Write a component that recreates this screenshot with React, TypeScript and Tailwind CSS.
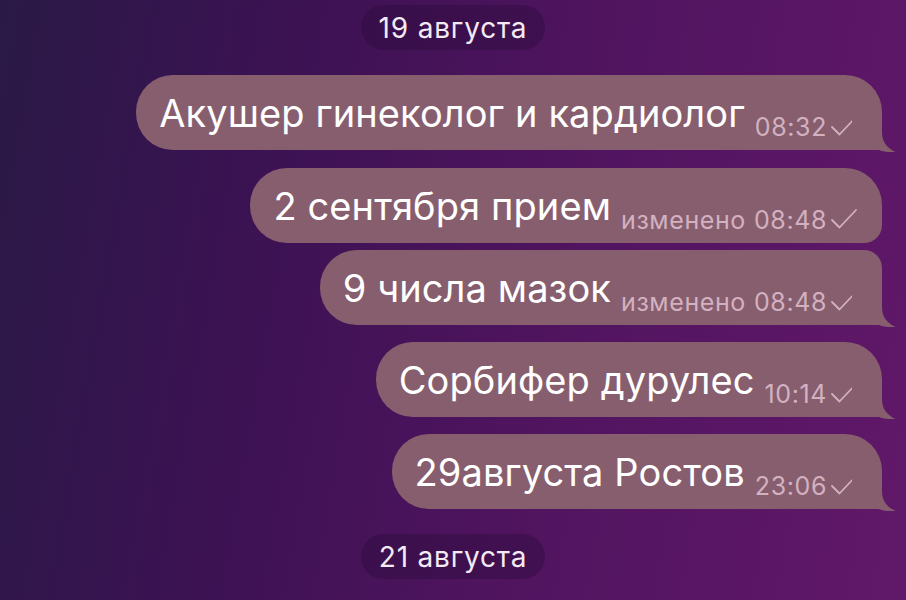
import React from 'react'

type Msg = {
  text: string
  time: string
  edited?: boolean
  tail: boolean
  shape: string
}

const MESSAGES: Msg[] = [
  { text: 'Акушер гинеколог и кардиолог', time: '08:32', tail: true, shape: 'rounded-[37px] rounded-br-none' },
  { text: '2 сентября прием', time: '08:48', edited: true, tail: false, shape: 'rounded-[37px] rounded-br-[18px]' },
  { text: '9 числа мазок', time: '08:48', edited: true, tail: true, shape: 'rounded-[37px] rounded-tr-[18px] rounded-br-none' },
  { text: 'Сорбифер дурулес', time: '10:14', tail: true, shape: 'rounded-[37px] rounded-br-none' },
  { text: '29августа Ростов', time: '23:06', tail: true, shape: 'rounded-[37px] rounded-br-none' },
]

function Check() {
  return (
    <svg width="28" height="22" viewBox="0 0 28 22" fill="none" className="ml-[3px] -translate-y-[1px]">
      <path d="M2 12 L9.5 19.5 L26 2" stroke="#d3b1c0" strokeWidth="1.8" strokeLinecap="round" strokeLinejoin="round" />
    </svg>
  )
}

function Tail() {
  return (
    <svg
      width="44"
      height="40"
      viewBox="0 0 44 40"
      className="absolute right-[-14px] bottom-[-2px]"
    >
      <path
        d="M0 0 H30 V20 C30 30 35 36 43.5 40 C35 40.5 28 39.5 23 36 C20 37.5 16 38 12 38 H0 Z"
        fill="#875e6e"
      />
    </svg>
  )
}

function DatePill({ label }: { label: string }) {
  return (
    <div className="flex justify-center">
      <div className="h-[45px] px-[18px] flex items-center rounded-full bg-[#2a0a3a]/40 text-[#f3eaf3] text-[28px] leading-none tracking-[0.8px]">
        {label}
      </div>
    </div>
  )
}

function Bubble({ msg, gap }: { msg: Msg; gap: string }) {
  return (
    <div className={`flex justify-end pr-[24px] ${gap}`}>
      <div className={`relative h-[75px] flex items-center pl-[23px] pr-[24px] bg-[#875e6e] ${msg.shape}`}>
        <div className="flex items-baseline">
          <span className="text-[38px] leading-none text-white tracking-[0.1px]">{msg.text}</span>
          <span className="ml-[10px] flex items-center translate-y-[9px] text-[25px] leading-none text-[#d3b1c0] tracking-[0.6px]">
            {msg.edited && <span className="mr-[8px]">изменено</span>}
            {msg.time}
            <Check />
          </span>
        </div>
        {msg.tail && <Tail />}
      </div>
    </div>
  )
}

export default function App() {
  return (
    <div
      className="w-[906px] h-[600px] overflow-hidden flex flex-col pt-[5px] bg-[linear-gradient(100deg,#2a1946_0%,#3c1253_30%,#50145f_60%,#611869_100%)]"
      style={{ fontFamily: 'Inter, "Noto Sans", sans-serif' }}
    >
      <DatePill label="19 августа" />
      <Bubble msg={MESSAGES[0]} gap="mt-[25px]" />
      <Bubble msg={MESSAGES[1]} gap="mt-[18px]" />
      <Bubble msg={MESSAGES[2]} gap="mt-[7px]" />
      <Bubble msg={MESSAGES[3]} gap="mt-[17px]" />
      <Bubble msg={MESSAGES[4]} gap="mt-[17px]" />
      <div className="mt-[25px]">
        <DatePill label="21 августа" />
      </div>
    </div>
  )
}
